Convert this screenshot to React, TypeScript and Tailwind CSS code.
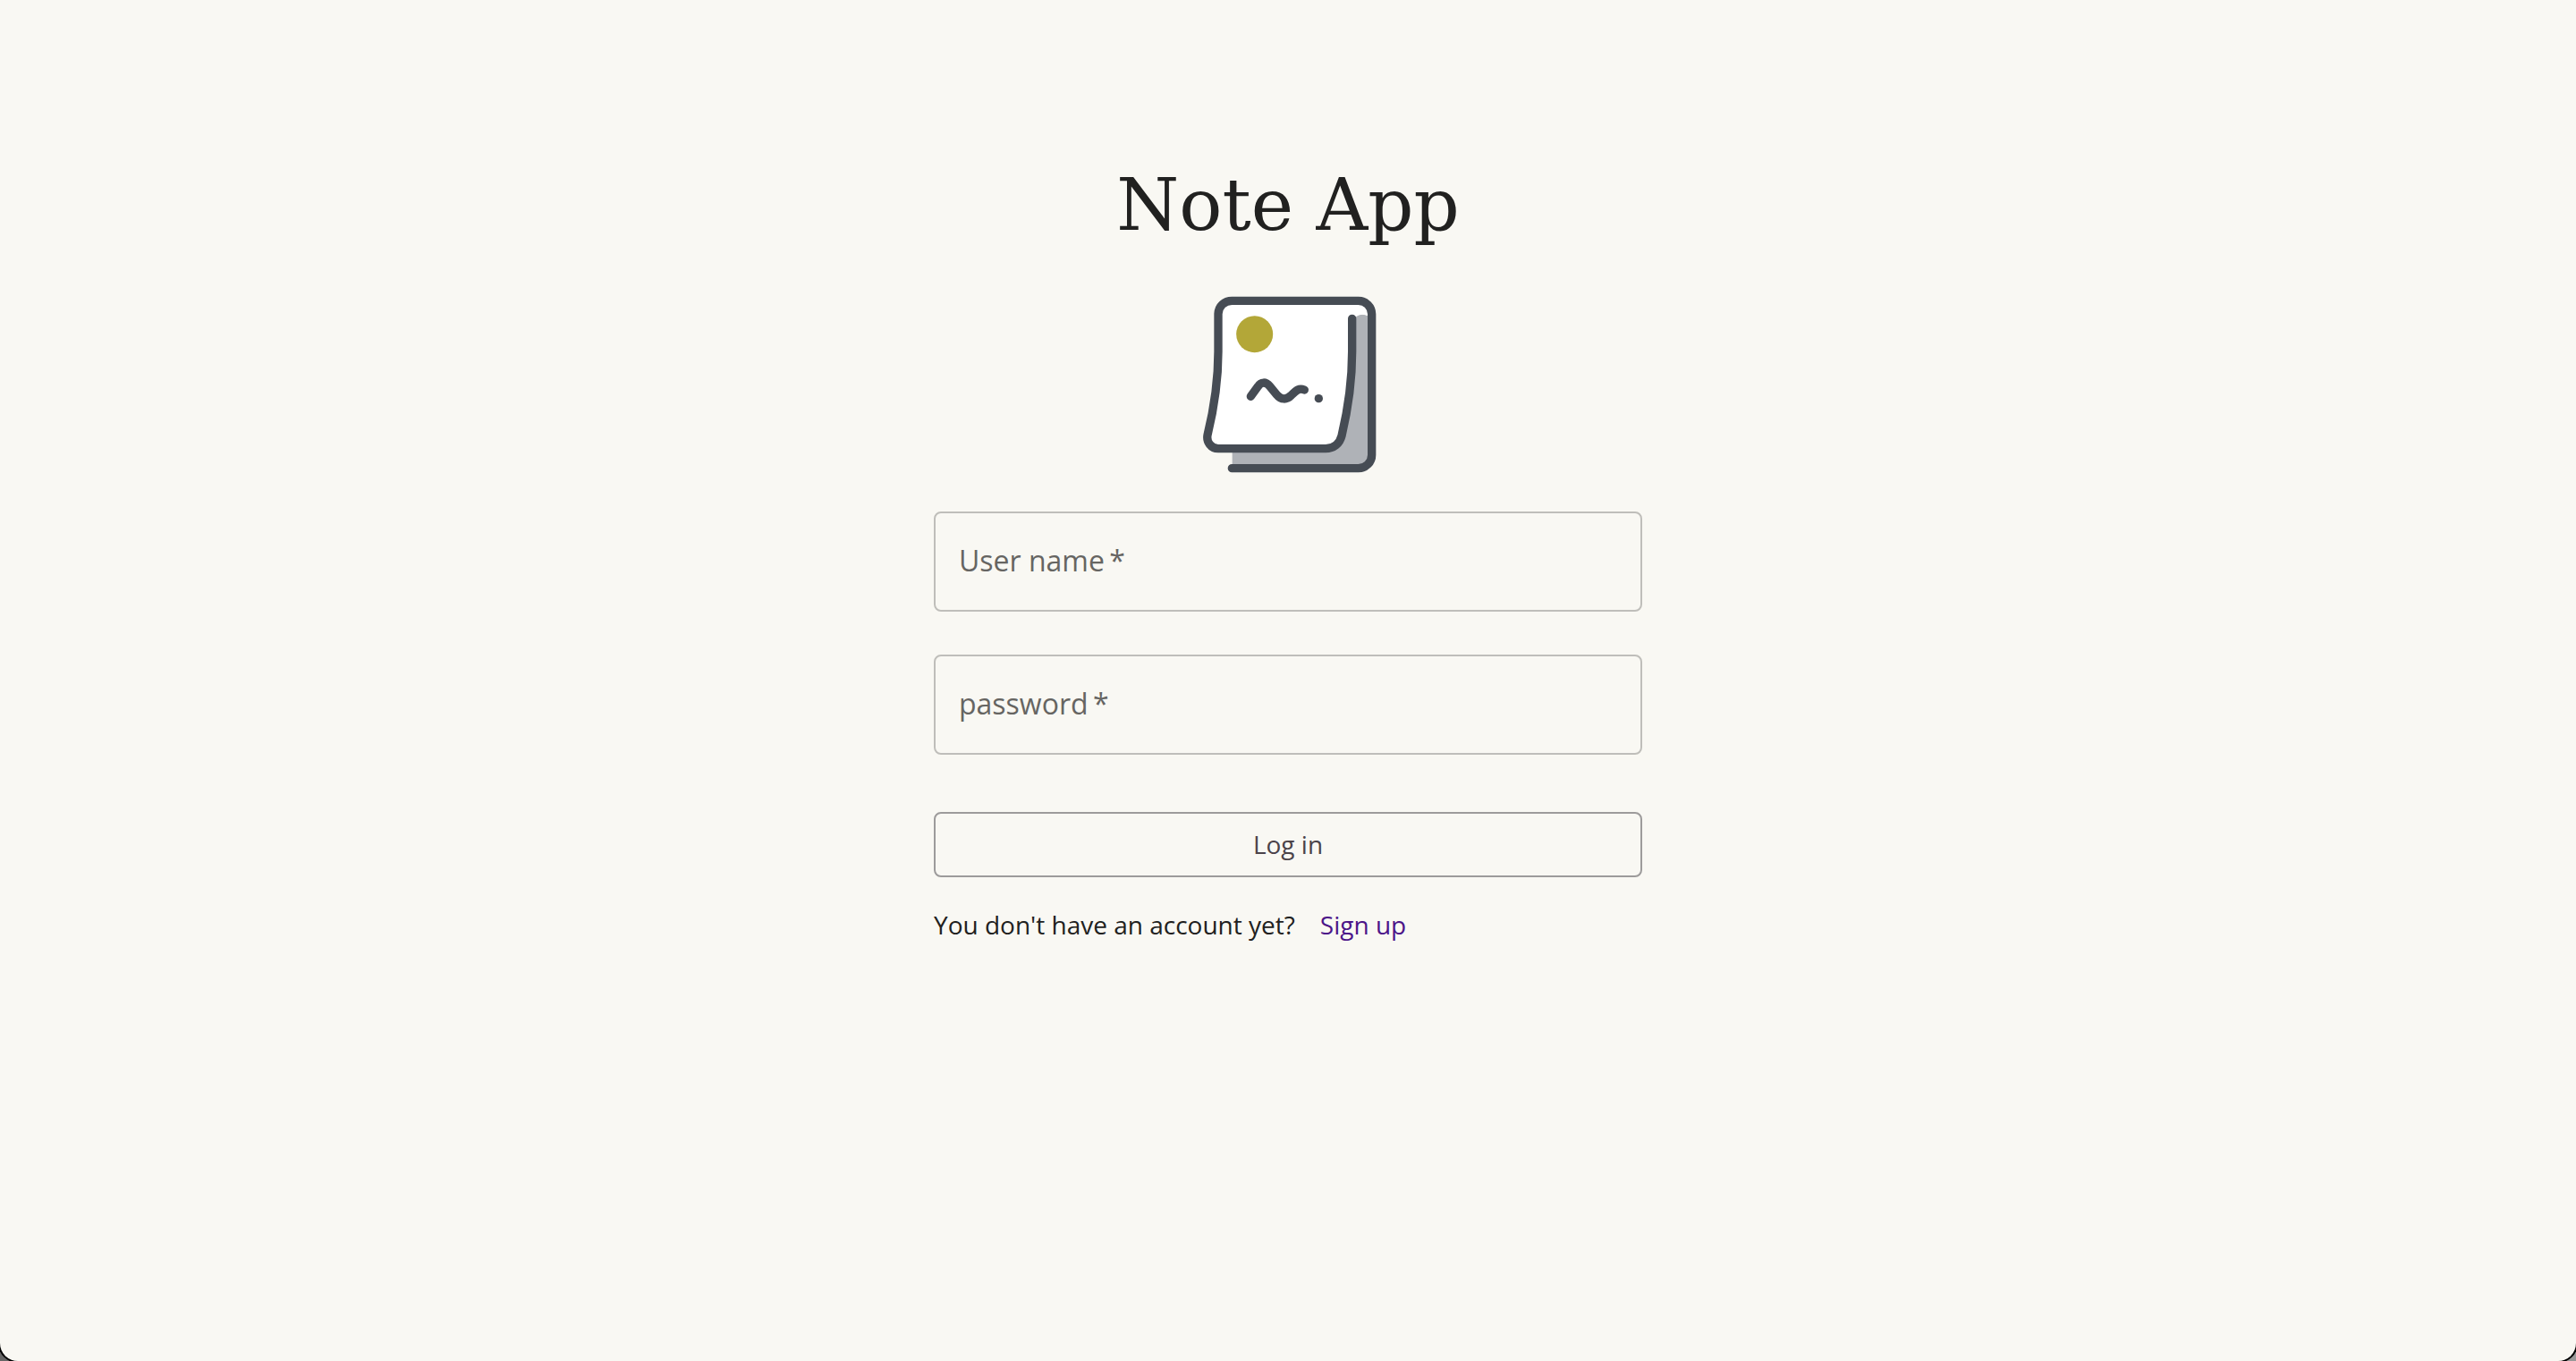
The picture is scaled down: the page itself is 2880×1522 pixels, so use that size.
import React from "react";

function NoteLogo() {
  return (
    <svg viewBox="60 60 600 600" className="size-[200px]" role="img" aria-label="Note App logo">
      <path
        d="M173 130V641H596Q642 639 642 596V148L628 130Q606 120 588 132Z"
        fill="#afb2b7"
      />
      <path
        d="M126 122Q128 80 172 78H596Q640 82 642 126V142L628 129Q606 120 588 132L575 138V250C575 350 562 440 541 532Q530 575 486 575H126C102 575 86 552 90 530C112 440 126 350 126 250Z"
        fill="#fff"
      />
      <path
        d="M575 139V250C575 350 561 444 540 532C533 559 513 575 486 575H126C101 575 86 552 90 530C112 440 126 350 126 250V123C127 97 147 79 172 79H596C621 79 641 99 641 124V596C641 621 621 641 596 641H172"
        fill="none"
        stroke="#464c54"
        strokeWidth="28"
        strokeLinecap="round"
        strokeLinejoin="round"
      />
      <circle cx="248" cy="191" r="61.5" fill="#b3a738" />
      <path
        d="M235 400L259 367C269 350 286 350 299 366L323 395C336 412 356 412 371 396C388 379 397 371 415 378"
        fill="none"
        stroke="#464c54"
        strokeWidth="28"
        strokeLinecap="round"
        strokeLinejoin="round"
      />
      <circle cx="463" cy="407" r="14" fill="#464c54" />
    </svg>
  );
}

type FieldProps = {
  id: string;
  label: string;
  type: string;
};

function Field({ id, label, type }: FieldProps) {
  return (
    <div className="grid w-full">
      <input
        id={id}
        name={id}
        type={type}
        required
        placeholder=" "
        className="peer col-start-1 row-start-1 h-28 w-full rounded-lg border-2 border-[#bfbeba] bg-transparent px-7 text-[32px] text-[#212120] outline-none focus:border-[#464c54]"
      />
      <label
        htmlFor={id}
        className="pointer-events-none invisible col-start-1 row-start-1 self-center px-7 pb-0.5 text-[32px] leading-[46px] text-[#666562] peer-placeholder-shown:visible"
      >
        {label}
        {"\u2009*"}
      </label>
    </div>
  );
}

export default function App() {
  return (
    <div className="flex min-h-screen flex-col overflow-hidden bg-linear-to-r from-[#666] to-[#999] font-['Open_Sans',sans-serif] text-[#212120]">
      <main className="flex grow flex-col items-center rounded-b-[20px] bg-[#f9f8f3] px-8 pt-[174px] shadow-[0_0_0_2px_#000]">
        <h1 className="font-['DejaVu_Serif',serif] text-[80px] leading-[112px]">
          Note App
        </h1>
        <div className="mt-11">
          <NoteLogo />
        </div>
        <form className="mt-[42px] flex w-full max-w-[792px] flex-col" onSubmit={(e) => e.preventDefault()}>
          <div className="flex flex-col gap-12">
            <Field id="username" label="User name" type="text" />
            <Field id="password" label="password" type="password" />
          </div>
          <button
            type="submit"
            className="mt-16 h-[73px] w-full rounded-lg border-2 border-[#9d9b9b] pb-0.5 text-[28px] text-[#4b4349]"
          >
            Log in
          </button>
          <p className="mt-8 flex gap-7 text-[28px] leading-[42px]">
            <span>You don't have an account yet?</span>
            <a href="#signup" className="text-[#4c1589]">
              Sign up
            </a>
          </p>
        </form>
      </main>
    </div>
  );
}
